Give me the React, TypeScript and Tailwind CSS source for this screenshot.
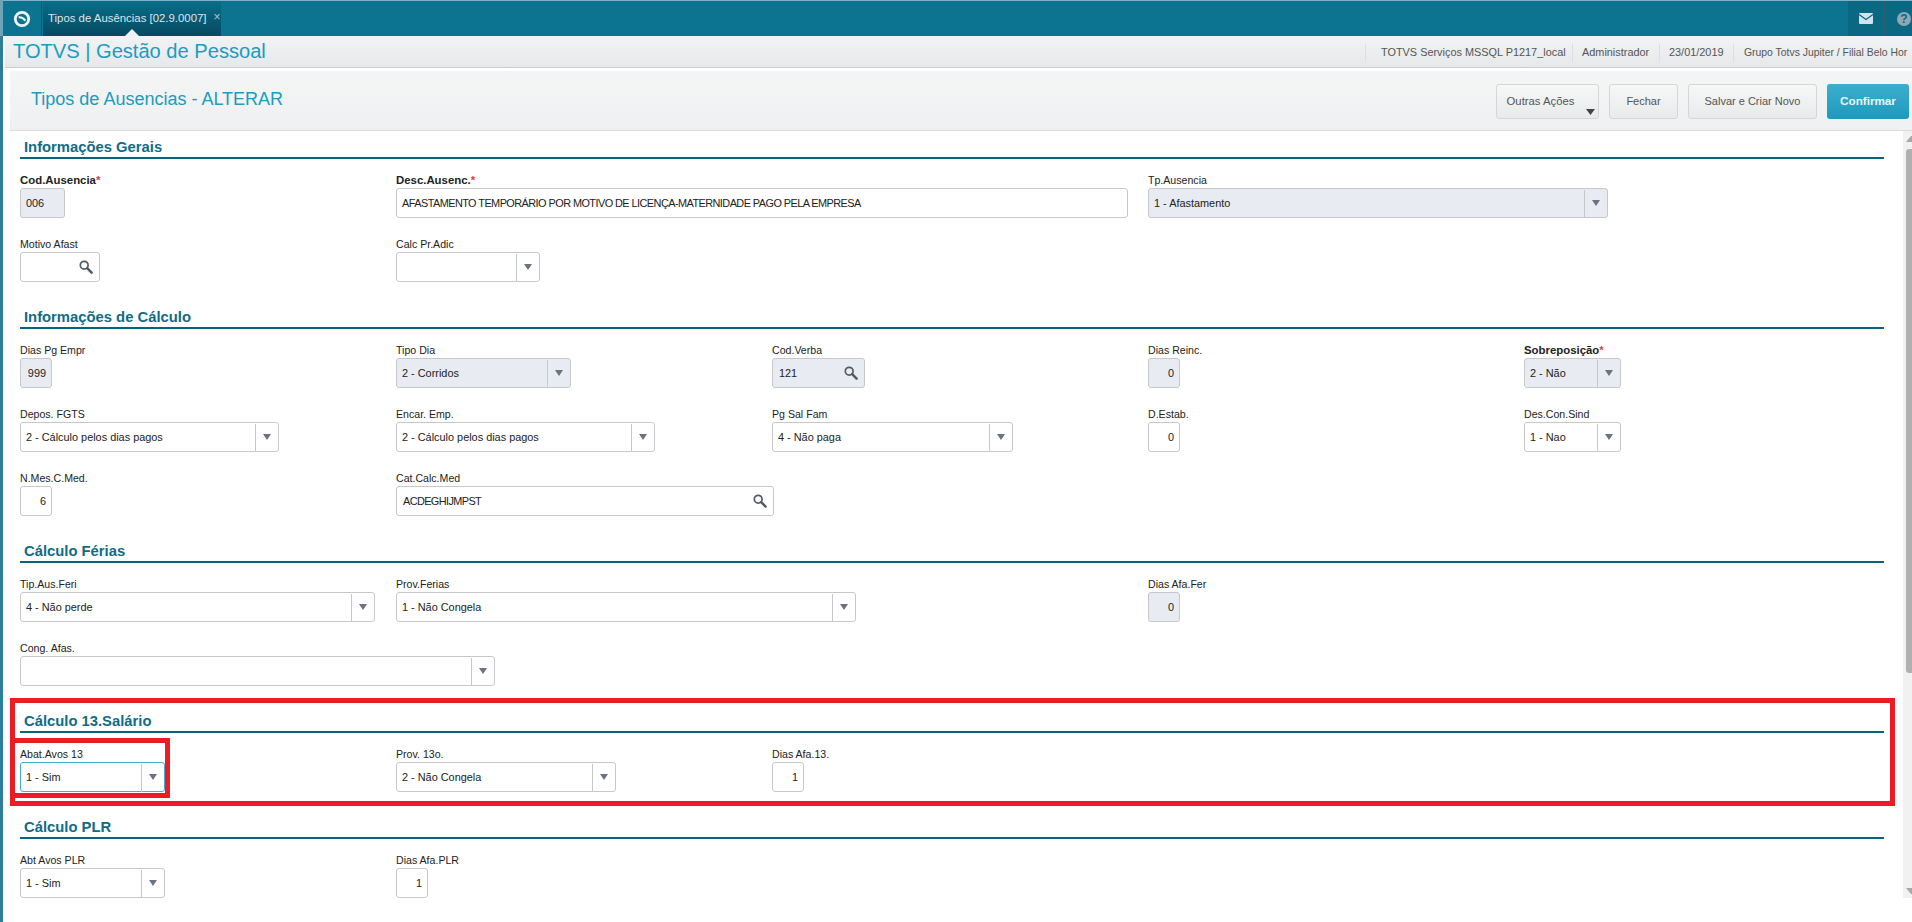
import { ReactNode } from "react"

function Arrow() {
    return (
        <svg width="8" height="6" viewBox="0 0 8 6" className="-mt-[2px]">
            <polygon points="0,0 8,0 4,6" fill="#6b7280" />
        </svg>
    )
}

function Magnifier() {
    return (
        <svg width="14" height="14" viewBox="0 0 14 14" className="mr-[6px] shrink-0">
            <circle cx="5.2" cy="5.2" r="3.9" fill="none" stroke="#4f5b66" strokeWidth="1.7" />
            <line x1="8.2" y1="8.2" x2="12.6" y2="12.6" stroke="#4f5b66" strokeWidth="2.5" strokeLinecap="round" />
        </svg>
    )
}

function Box({ w, disabled, focused, children }: { w: string; disabled?: boolean; focused?: boolean; children: ReactNode }) {
    return (
        <div
            className={`${w} h-[30px] flex items-center rounded-[3px] border ${focused ? "border-[#3db1d1]" : "border-[#c6c8ca]"} ${disabled ? "bg-[#e8ebf1]" : "bg-white"}`}
        >
            {children}
        </div>
    )
}

function Label({ text, required }: { text: string; required?: boolean }) {
    return (
        <div className={`h-4 leading-4 text-[#222] whitespace-nowrap ${required ? "text-[11.4px] font-bold" : "text-[10.6px]"}`}>
            {text}
            {required && <span className="text-[#e5393f]">*</span>}
        </div>
    )
}

type FieldProps = { label: string; required?: boolean; w: string; value?: string; disabled?: boolean; focused?: boolean; className?: string }

function TextField({ label, required, w, value, disabled, className = "" }: FieldProps) {
    return (
        <div className={className}>
            <Label text={label} required={required} />
            <Box w={w} disabled={disabled}>
                <span className={`pl-[5px] text-[10.9px] text-[#222] whitespace-nowrap ${value && value.length > 10 ? "tracking-[-0.55px]" : ""}`}>{value}</span>
            </Box>
        </div>
    )
}

function NumField({ label, value, disabled, className = "" }: FieldProps) {
    return (
        <div className={className}>
            <Label text={label} />
            <Box w="w-[32px]" disabled={disabled}>
                <span className="w-full pr-[5px] text-right text-[10.9px] text-[#222]">{value}</span>
            </Box>
        </div>
    )
}

function SelectField({ label, required, w, value, disabled, focused, className = "" }: FieldProps) {
    return (
        <div className={className}>
            <Label text={label} required={required} />
            <Box w={w} disabled={disabled} focused={focused}>
                <span className="flex-1 pl-[5px] text-[10.9px] text-[#222] whitespace-nowrap">{value}</span>
                <div className="w-[23px] h-[28px] mt-[1px] flex items-center justify-center border-l border-[#c6c8ca]">
                    <Arrow />
                </div>
            </Box>
        </div>
    )
}

function LookupField({ label, w, value, disabled, className = "" }: FieldProps) {
    return (
        <div className={className}>
            <Label text={label} />
            <Box w={w} disabled={disabled}>
                <span className={`flex-1 pl-[6px] text-[10.9px] text-[#222] whitespace-nowrap ${value && value.length > 10 ? "tracking-[-0.6px]" : ""}`}>{value}</span>
                <Magnifier />
            </Box>
        </div>
    )
}

function Section({ title, first, children, overlay }: { title: string; first?: boolean; children: ReactNode; overlay?: ReactNode }) {
    return (
        <section className={`relative pl-[17px] pr-[19px] ${first ? "pt-[6px]" : "pt-[25px]"}`}>
            <h2 className="h-5 pl-1 leading-5 text-[14.8px] font-bold text-[#0f6c87]">{title}</h2>
            <div className="h-[2px] bg-[#03657c]" />
            <div className="mt-[13px] grid grid-cols-[repeat(4,376px)_1fr] gap-y-[18px]">{children}</div>
            {overlay}
        </section>
    )
}

function ActionButton({ children, w }: { children: ReactNode; w: string }) {
    return (
        <button className={`${w} relative h-[35px] rounded-[3px] border border-[#d4d6d7] bg-gradient-to-b from-[#f6f7f7] to-[#e9eaeb] text-[11px] text-[#555]`}>
            {children}
        </button>
    )
}

export default function App() {
    return (
        <div className="w-[1912px] h-[922px] flex overflow-hidden bg-white font-['Liberation_Sans',Arial,sans-serif]">
            <div className="w-[3px] flex flex-col bg-[#2a7f9b]">
                <div className="h-[36px] bg-[#6fa3b7]" />
            </div>
            <div className="flex-1 min-w-0 flex flex-col">
                {/* Barra superior */}
                <div className="h-[36px] shrink-0 flex bg-[#0c7391] border-t border-[#7fb2c6]">
                    <div className="w-[39px] flex items-center justify-center border-r border-[#0a5d76]">
                        <svg width="18" height="18" viewBox="0 0 18 18">
                            <circle cx="9" cy="9" r="6.7" fill="none" stroke="#eef5f8" strokeWidth="2.8" />
                            <path d="M5.6 7.4 Q9 6.6 12.4 10.6" fill="none" stroke="#eef5f8" strokeWidth="2.2" />
                        </svg>
                    </div>
                    <div className="relative w-[178px] ml-px flex items-center pl-[5px] bg-gradient-to-b from-[#0a6e8a] to-[#064a60]">
                        <span className="text-[11.4px] text-[#d9e8ee] whitespace-nowrap">Tipos de Ausências [02.9.0007]</span>
                        <span className="ml-[7px] -mt-[3px] text-[12px] leading-none text-[#a9c7d3]">×</span>
                        <svg width="14" height="7" viewBox="0 0 14 7" className="absolute bottom-0 left-[82px]">
                            <polygon points="0,7 7,0 14,7" fill="#eef0f2" />
                        </svg>
                    </div>
                    <div className="flex-1" />
                    <div className="w-[36px] flex items-center justify-center bg-[#0b6883]">
                        <svg width="14" height="11" viewBox="0 0 14 11">
                            <rect width="14" height="11" rx="1" fill="#d2e3eb" />
                            <path d="M0 1.4 L7 6.4 L14 1.4" fill="none" stroke="#0b6883" strokeWidth="1.2" />
                        </svg>
                    </div>
                    <div className="w-[28px] flex items-center pl-[12px] bg-[#0b6883] border-l border-[#2f5f70] overflow-hidden">
                        <span className="w-[14px] h-[14px] shrink-0 rounded-full bg-[#8ea9b5] flex items-center justify-center text-[12px] font-bold leading-none text-[#0b6883]">?</span>
                    </div>
                </div>

                {/* Cabeçalho do sistema */}
                <div className="h-[32px] shrink-0 ml-[2px] flex items-center bg-gradient-to-b from-[#f1f3f5] to-[#e6e8ea] border-b border-[#c9cbcd]">
                    <div className="flex-1 pl-2 text-[20.1px] text-[#1b9cc0] whitespace-nowrap">TOTVS | Gestão de Pessoal</div>
                    <div className="w-[547px] h-[18px] mt-[2px] flex items-center overflow-hidden text-[10.9px] text-[#555] whitespace-nowrap">
                        <div className="w-[207px] shrink-0 h-full flex items-center pl-[15px] border-l border-[#dcdee0]">TOTVS Serviços MSSQL P1217_local</div>
                        <div className="w-[87px] shrink-0 h-full flex items-center pl-[9px] border-l border-[#dcdee0]">Administrador</div>
                        <div className="w-[74px] shrink-0 h-full flex items-center pl-[9px] border-l border-[#dcdee0]">23/01/2019</div>
                        <div className="flex-1 min-w-0 h-full flex items-center pl-[10px] border-l border-[#dcdee0] text-[10.4px]">Grupo Totvs Jupiter / Filial Belo Hor</div>
                    </div>
                </div>

                {/* Título da página */}
                <div className="h-[60px] shrink-0 mt-[3px] ml-[7px] flex items-center justify-between bg-gradient-to-b from-[#f4f5f5] to-[#eff0f1] border-b border-[#dcdddd]">
                    <h1 className="pl-[21px] pb-[2px] text-[18px] text-[#1b9cc0]">Tipos de Ausencias - ALTERAR</h1>
                    <div className="flex gap-[10px] pr-[3px] pt-[1px]">
                        <ActionButton w="w-[103px]">
                            <span className="block pr-[14px] text-[11.3px]">Outras Ações</span>
                            <svg width="9" height="6" viewBox="0 0 9 6" className="absolute right-[3px] bottom-[3px]">
                                <polygon points="0,0 9,0 4.5,6" fill="#444" />
                            </svg>
                        </ActionButton>
                        <ActionButton w="w-[69px]">Fechar</ActionButton>
                        <ActionButton w="w-[129px]">Salvar e Criar Novo</ActionButton>
                        <button className="w-[82px] h-[35px] rounded-[3px] bg-gradient-to-b from-[#3bafcc] to-[#1a9abd] text-[11.7px] font-bold text-[#eaf6fa]">Confirmar</button>
                    </div>
                </div>

                <div className="flex-1 min-h-0 flex">
                    <main className="flex-1 min-w-0">
                        <Section title="Informações Gerais" first>
                            <TextField label="Cod.Ausencia" required w="w-[45px]" value="006" disabled />
                            <TextField label="Desc.Ausenc." required w="w-[732px]" value="AFASTAMENTO TEMPORÁRIO POR MOTIVO DE LICENÇA-MATERNIDADE PAGO PELA EMPRESA" className="col-span-2" />
                            <SelectField label="Tp.Ausencia" w="w-[460px]" value="1 - Afastamento" disabled />
                            <LookupField label="Motivo Afast" w="w-[80px]" className="col-start-1" />
                            <SelectField label="Calc Pr.Adic" w="w-[144px]" />
                        </Section>

                        <Section title="Informações de Cálculo">
                            <NumField label="Dias Pg Empr" w="" value="999" disabled />
                            <SelectField label="Tipo Dia" w="w-[175px]" value="2 - Corridos" disabled />
                            <LookupField label="Cod.Verba" w="w-[93px]" value="121" disabled />
                            <NumField label="Dias Reinc." w="" value="0" disabled />
                            <SelectField label="Sobreposição" required w="w-[97px]" value="2 - Não" disabled />
                            <SelectField label="Depos. FGTS" w="w-[259px]" value="2 - Cálculo pelos dias pagos" />
                            <SelectField label="Encar. Emp." w="w-[259px]" value="2 - Cálculo pelos dias pagos" />
                            <SelectField label="Pg Sal Fam" w="w-[241px]" value="4 - Não paga" />
                            <NumField label="D.Estab." w="" value="0" />
                            <SelectField label="Des.Con.Sind" w="w-[97px]" value="1 - Nao" />
                            <NumField label="N.Mes.C.Med." w="" value="6" />
                            <LookupField label="Cat.Calc.Med" w="w-[378px]" value="ACDEGHIJMPST" />
                        </Section>

                        <Section title="Cálculo Férias">
                            <SelectField label="Tip.Aus.Feri" w="w-[355px]" value="4 - Não perde" />
                            <SelectField label="Prov.Ferias" w="w-[460px]" value="1 - Não Congela" className="col-span-2" />
                            <NumField label="Dias Afa.Fer" w="" value="0" disabled />
                            <SelectField label="Cong. Afas." w="w-[475px]" className="col-start-1 col-span-2" />
                        </Section>

                        <Section
                            title="Cálculo 13.Salário"
                            overlay={
                                <>
                                    <div className="absolute left-[7px] top-[12px] w-[1885px] h-[108px] border-[5px] border-[#ed1c24] pointer-events-none" />
                                    <div className="absolute left-[7px] top-[52px] w-[160px] h-[60px] border-[5px] border-[#ed1c24] pointer-events-none" />
                                </>
                            }
                        >
                            <SelectField label="Abat.Avos 13" w="w-[145px]" value="1 - Sim" focused />
                            <SelectField label="Prov. 13o." w="w-[220px]" value="2 - Não Congela" />
                            <NumField label="Dias Afa.13." w="" value="1" />
                        </Section>

                        <Section title="Cálculo PLR">
                            <SelectField label="Abt Avos PLR" w="w-[145px]" value="1 - Sim" />
                            <NumField label="Dias Afa.PLR" w="" value="1" />
                        </Section>
                    </main>

                    {/* Barra de rolagem */}
                    <div className="w-[9px] h-[767px] shrink-0 flex flex-col justify-between bg-[#f1f1f1] overflow-hidden">
                        <div>
                            <svg width="9" height="6" viewBox="0 0 9 6" className="mt-[5px]">
                                <polygon points="3,6 8,0 9,0 9,6" fill="#a8a8a8" />
                            </svg>
                            <div className="ml-[3px] mt-[7px] h-[524px] rounded-tl-[3px] rounded-bl-[3px] bg-[#b0b0b0]" />
                        </div>
                        <svg width="9" height="6" viewBox="0 0 9 6" className="mb-[4px]">
                            <polygon points="3,0 9,0 9,6 8,6" fill="#a8a8a8" />
                        </svg>
                    </div>
                </div>
            </div>
        </div>
    )
}
